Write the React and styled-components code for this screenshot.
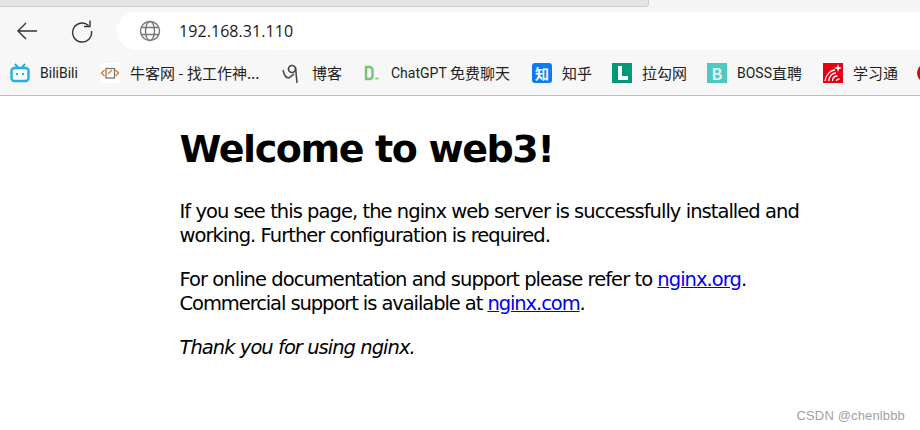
import React from "react";
import styled, { createGlobalStyle } from "styled-components";

const Global = createGlobalStyle`
  html, body { margin: 0; padding: 0; background: #fff; }
  body { width: 920px; height: 430px; overflow: hidden; }
`;
const Frame = styled.div`
  width: 920px; height: 430px; display: flex; flex-direction: column; position: relative;
  font-family: "Noto Sans CJK SC", sans-serif;
`;
const TabStrip = styled.div`
  height: 8px; background: #f5f5f5; flex: none;
`;
const ActiveTab = styled.div`
  width: 649px; height: 7px; background: #e4e4e4; border-bottom: 1px solid #cfcfcf; border-right: 1px solid #cfcfcf;
  border-bottom-right-radius: 4px; box-sizing: border-box;
`;
const Toolbar = styled.div`
  height: 46px; background: #f7f7f7; display: flex; align-items: center; flex: none;
`;
const NavIcon = styled.svg`
  width: 24px; height: 24px; flex: none; fill: none; stroke: ${p => p.$color || "#333"}; stroke-width: 1.4;
  margin-left: ${p => p.$ml}px;
`;
const Address = styled.div`
  margin-left: 23px; flex: 1; height: 38px; background: #fff; border-radius: 19px 0 0 19px;
  display: flex; align-items: center; padding-left: 21px;
`;
const AddressText = styled.span`
  font: 16px "Open Sans", "Liberation Sans", sans-serif; color: #1a1a1a; margin-left: 17px; letter-spacing: 0.07px;
`;
const Bookmarks = styled.div`
  height: 37px; padding: 0 0 4px 10px; background: #f7f7f7; border-bottom: 1px solid #bdbdbd; flex: none;
  display: flex; align-items: center; overflow: hidden;
`;
const Bookmark = styled.div`
  display: flex; align-items: center; flex: none; width: ${p => p.$w}px;
  font: 15px "Noto Sans CJK SC", sans-serif; color: #222; white-space: pre;
`;
const Latin = styled.span`
  font: 14px "Roboto", sans-serif;
`;
const BookmarkIcon = styled.svg`
  width: 20px; height: 20px; flex: none; margin-right: ${p => p.$gap || 10}px;
`;
const LetterIcon = styled.div`
  width: 20px; height: 20px; flex: none; margin-right: 10px; display: flex; align-items: center; justify-content: center;
  background: ${p => p.$bg}; color: ${p => p.$fg}; border-radius: ${p => p.$radius || 0}px;
  font: 700 ${p => p.$size}px/20px "Noto Sans CJK SC", "Liberation Sans", sans-serif;
`;
const Page = styled.main`
  flex: 1; background: #fff; padding: 30px 0 0 179.5px; color: #000; font-family: "DejaVu Sans", sans-serif;
`;
const Title = styled.h1`
  margin: 0 0 27px; font-size: 38px; line-height: 47px; font-weight: 700; letter-spacing: -1.38px; white-space: nowrap;
`;
const Para = styled.p`
  margin: 0 0 20px; font-size: 19.5px; line-height: 24px; letter-spacing: -0.96px; white-space: nowrap;
  font-style: ${p => (p.$italic ? "italic" : "normal")};
`;
const TightLine = styled.span`
  letter-spacing: -1.08px;
`;
const Link = styled.a`
  color: #0000ee; text-decoration: underline;
`;
const Watermark = styled.div`
  position: absolute; right: 15px; bottom: 7px; font: 13px "Liberation Sans", sans-serif; color: #a2a2a2; letter-spacing: 0.15px;
`;

const items = [
  { id: "bili", w: 90, label: <Latin>BiliBili</Latin>, svg: <><rect x="1.500" y="5" width="17" height="13" rx="3" fill="#fff" stroke="#20b0e3" strokeWidth="2.400" /><path d="M5 1l3 3.500M15 1l-3 3.500" stroke="#20b0e3" strokeWidth="2" /><path d="M7 10v2M13 10v2" stroke="#20b0e3" strokeWidth="2" /></> },
  { id: "nowcoder", w: 182, label: <>牛客网 - 找工作神...</>, svg: <><rect width="20" height="20" rx="2" fill="#fff" /><rect x="6" y="5.500" width="8.500" height="9.500" fill="none" stroke="#777" strokeWidth="1.300" /><path d="M4.500 7l-3 3 3 3M15.500 7l3 3-3 3" stroke="#ef7d22" strokeWidth="1.500" fill="none" /><path d="M8 11l4-4" stroke="#ef7d22" strokeWidth="1.500" /></> },
  { id: "blog", w: 80, label: <>博客</>, svg: <><path d="M1 7c1 5 3 8 6 8l5-4" stroke="#555" strokeWidth="1.700" fill="none" /><path d="M13.500 4l1.500 16" stroke="#444" strokeWidth="1.500" fill="none" /><circle cx="10" cy="6" r="3.500" fill="none" stroke="#444" strokeWidth="1.700" /></> },
  { id: "gpt", w: 170, gap: 9, label: <><Latin>ChatGPT </Latin>免费聊天</>, svg: <><path d="M4 4h3.500a3 3 0 0 1 3 3v6a3 3 0 0 1-3 3H4z" fill="none" stroke="#72c66f" strokeWidth="2.400" /><path d="M13.500 15.500h3" stroke="#72c66f" strokeWidth="1.600" /></> },
  { id: "zhihu", w: 80, label: <>知乎</>, letter: "知", bg: "#0a7cf5", fg: "#fff", size: 14, radius: 3 },
  { id: "lagou", w: 95, label: <>拉勾网</>, svg: <><rect width="20" height="20" fill="#009a76" /><path d="M6 3h4v10h6v4H6z" fill="#fff" /></> },
  { id: "boss", w: 116, label: <><Latin>BOSS</Latin>直聘</>, letter: "B", bg: "#4fc8bf", fg: "#dff5f2", size: 16 },
  { id: "xuexi", w: 94, label: <>学习通</>, svg: <><rect width="20" height="20" fill="#e60012" /><path d="M2 18c1-7 6-11 10-11M5.500 18c1-5 4-8 7.500-8M9.500 18c0-3 2-5 5-5M13.500 18c0-1 1-2 3-2" stroke="#fff" strokeWidth="1.300" fill="none" /><path d="M15 1l1 3 3 1-3 1-1 3-1-3-3-1 3-1z" fill="#fff" /></> },
  { id: "more", w: 20, label: null, svg: <circle cx="10" cy="10" r="10" fill="#e60012" /> },
];

export default function App() {
  return (
    <Frame>
      <Global />
      <TabStrip><ActiveTab /></TabStrip>
      <Toolbar>
        <NavIcon $ml={15} viewBox="0 0 24 24"><path d="M22 12H3M11 4l-8 8 8 8" /></NavIcon>
        <NavIcon $ml={31} viewBox="0 0 24 24"><path d="M18.500 6.500A9.500 9.500 0 1 0 21.500 12" /><path d="M20 1.500v6h-6" /></NavIcon>
        <Address>
          <NavIcon $ml={0} $color="#777" viewBox="0 0 24 24">
            <circle cx="12" cy="12" r="9.500" /><ellipse cx="12" cy="12" rx="4.500" ry="9.500" /><path d="M3 8.500h18M3 15.500h18" />
          </NavIcon>
          <AddressText>192.168.31.110</AddressText>
        </Address>
      </Toolbar>
      <Bookmarks>
        {items.map(b => (
          <Bookmark key={b.id} $w={b.w}>
            {b.letter
              ? <LetterIcon $bg={b.bg} $fg={b.fg} $size={b.size} $radius={b.radius}>{b.letter}</LetterIcon>
              : <BookmarkIcon $gap={b.gap} viewBox="0 0 20 20">{b.svg}</BookmarkIcon>}
            {b.label}
          </Bookmark>
        ))}
      </Bookmarks>
      <Page>
        <Title>Welcome to web3!</Title>
        <Para>If you see this page, the nginx web server is successfully installed and<br />working. Further configuration is required.</Para>
        <Para>For online documentation and support please refer to <Link href="#">nginx.org</Link>.<br /><TightLine>Commercial support is available at <Link href="#">nginx.com</Link>.</TightLine></Para>
        <Para $italic>Thank you for using nginx.</Para>
      </Page>
      <Watermark>CSDN @chenlbbb</Watermark>
    </Frame>
  );
}
